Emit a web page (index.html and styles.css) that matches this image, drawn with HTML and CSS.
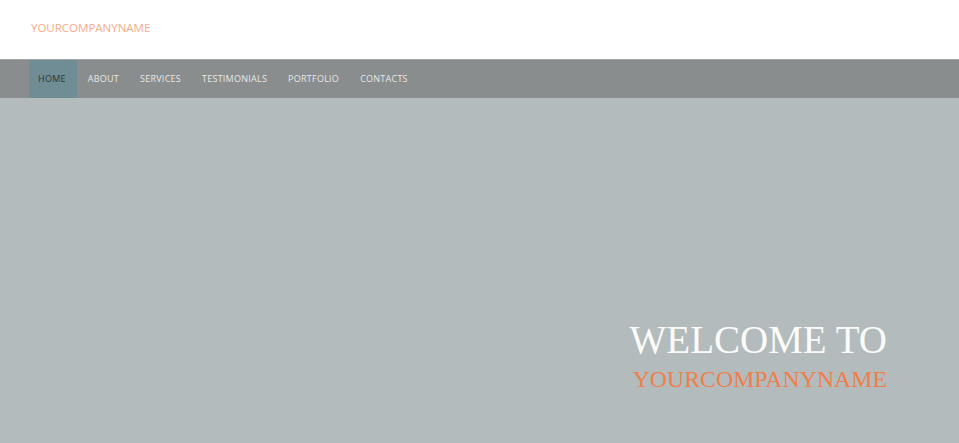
FILE: index.html
```html
<!DOCTYPE html>
<html>
<head>
<meta charset="utf-8">
<link rel="stylesheet" href="styles.css">
</head>
<body>
<header class="top">
  <div class="logo">YOURCOMPANYNAME</div>
</header>
<nav class="nav">
  <ul class="menu">
    <li class="item active">HOME</li>
    <li class="item">ABOUT</li>
    <li class="item">SERVICES</li>
    <li class="item">TESTIMONIALS</li>
    <li class="item">PORTFOLIO</li>
    <li class="item">CONTACTS</li>
  </ul>
</nav>
<section class="hero">
  <div class="welcome">
    <h1 class="title">WELCOME TO</h1>
    <h2 class="company">YOURCOMPANYNAME</h2>
  </div>
</section>
</body>
</html>
```
FILE: styles.css
```css
html, body {
  margin: 0;
  padding: 0;
  height: 100%;
}
body {
  display: flex;
  flex-direction: column;
  background: #b3bbbd;
  font-family: "Open Sans", "Liberation Sans", sans-serif;
}
.top {
  background: #ffffff;
  height: 59px;
  display: flex;
  align-items: center;
  padding-left: 31px;
  box-sizing: border-box;
}
.logo {
  color: #f6ab8b;
  font-size: 11.5px;
  padding-bottom: 5px;
}
.nav {
  background: #898d8d;
  border-top: 1px solid #a3a7a7;
  height: 38px;
  padding-left: 29px;
}
.menu {
  list-style: none;
  margin: 0;
  padding: 0;
  display: flex;
  height: 100%;
}
.item {
  display: flex;
  align-items: center;
  padding: 0 10px 1px;
  margin-right: 1px;
  font-size: 9px;
  color: #e8e8e8;
  letter-spacing: 0.25px;
}
.item.active {
  background: #708c94;
  color: #2e3538;
  padding: 0 11px 1px 9px;
}
.hero {
  flex: 1;
  display: flex;
  align-items: flex-end;
  justify-content: flex-end;
  padding: 0 72px 47px 0;
}
.welcome {
  text-align: right;
  font-family: "Liberation Serif", "DejaVu Serif", serif;
}
.title {
  margin: 0;
  font-weight: normal;
  font-size: 39px;
  line-height: 44px;
  color: #fbfbf9;
}
.company {
  margin: 0;
  font-weight: normal;
  font-size: 23.8px;
  line-height: 34px;
  color: #f07e4a;
}
```
